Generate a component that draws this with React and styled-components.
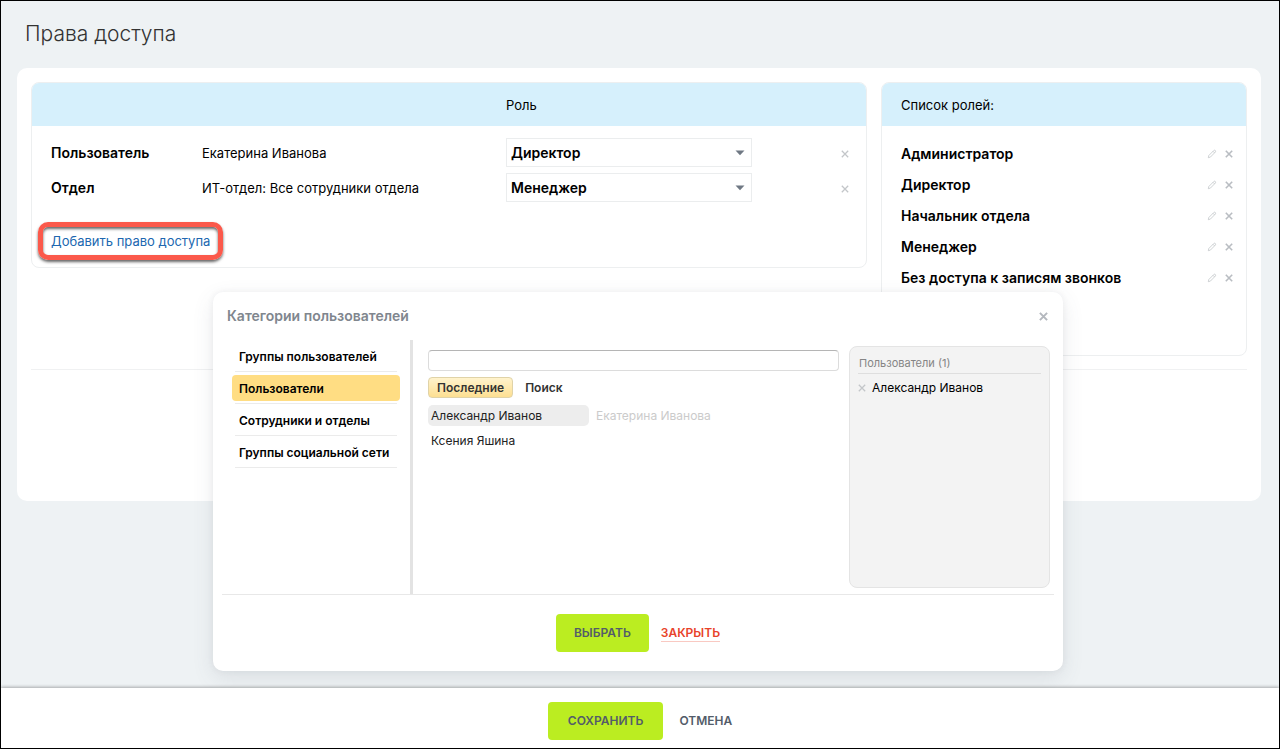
import React from 'react';
import styled, { createGlobalStyle, css } from 'styled-components';

const GlobalStyle = createGlobalStyle`
  *, *::before, *::after { box-sizing: border-box; }
  body {
    margin: 0;
    background: #eef2f4;
    color: #000;
    font: 13px/20px Inter, "Liberation Sans", sans-serif;
  }
  button, input, select { font: inherit; color: inherit; }
  button { cursor: pointer; }
  ul { list-style: none; margin: 0; padding: 0; }
`;

const Frame = styled.div`
  display: flex;
  flex-direction: column;
  min-height: 100vh;
  border: 1px solid #000;
`;

const PageTitle = styled.h1`
  margin: 0;
  padding: 17px 24px 18px;
  font-size: 21px;
  line-height: 32px;
  font-weight: 300;
  color: #333;
`;

const Card = styled.main`
  position: relative;
  min-height: 433px;
  margin: 0 18px 0 16px;
  padding: 14px;
  border-radius: 10px;
  background: #fff;
`;

const Columns = styled.div`
  display: flex;
  align-items: flex-start;
  gap: 14px;
  padding-bottom: 13px;
  border-bottom: 1px solid #f0f1f2;
`;

const Panel = styled.section`
  flex: ${(p) => (p.$side ? '0 1 366px' : '1 1 0')};
  min-height: ${(p) => (p.$side ? 274 : 186)}px;
  border: 1px solid #edeff0;
  border-radius: 8px;
  overflow: hidden;
`;

const PanelHeading = styled.h2`
  margin: 0;
  padding: 1px 19px 0;
  font-size: 13px;
  line-height: 42px;
  font-weight: 400;
  background: #d6f0fc;
`;

const AccessTable = styled.table`
  width: 100%;
  table-layout: fixed;
  border-collapse: collapse;
  th, td { padding: 0; text-align: left; }
  thead th { height: 43px; font-weight: 400; background: #d6f0fc; }
  tbody::before { content: ''; display: block; height: 9px; }
  tbody tr { height: 35px; }
  tbody th { padding-left: 19px; font-size: 14px; font-weight: 600; }
  td:last-child { padding-right: 17px; text-align: right; }
`;

const SelectBox = styled.div`
  position: relative;
  width: 246px;
  max-width: 100%;
  svg { position: absolute; top: 12px; right: 7px; pointer-events: none; }
`;

const RoleSelect = styled.select`
  display: block;
  width: 100%;
  height: 29px;
  padding: 0 24px 0 4px;
  border: 1px solid #ebedee;
  border-radius: 0;
  background: #fff;
  font-size: 14px;
  font-weight: 600;
  appearance: none;
`;

const IconButton = styled.button`
  display: inline-flex;
  padding: 0;
  border: 0;
  background: none;
  color: ${(p) => p.$color || '#c3c6c9'};
  svg { display: block; }
`;

const AddLink = styled.a`
  display: inline-block;
  margin: 17px 6px 0;
  padding: 4px 8px;
  border: 5px solid #fb594b;
  border-radius: 10px;
  box-shadow: 0 2px 3px rgba(0, 0, 0, 0.6), inset 0 2px 3px rgba(0, 0, 0, 0.6);
  color: #2067b0;
  text-decoration: none;
`;

const RoleList = styled.ul`
  padding: 12px 13px 0 19px;
`;

const RoleItem = styled.li`
  display: flex;
  align-items: center;
  gap: 8px;
  height: 31px;
  font-size: 14px;
  font-weight: 600;
  span { flex: 1; }
`;

const Dialog = styled.section`
  position: absolute;
  top: 224px;
  left: 0;
  right: 2px;
  width: 850px;
  max-width: 100%;
  margin: 0 auto;
  padding: 0 9px;
  border-radius: 10px;
  background: #fff;
  box-shadow: 0 7px 21px rgba(83, 92, 105, 0.12), 0 0 6px rgba(83, 92, 105, 0.08);
`;

const DialogHeader = styled.header`
  display: flex;
  align-items: center;
  justify-content: space-between;
  height: 48px;
  padding: 0 6px 0 5px;
  h2 { margin: 0; font-size: 14px; font-weight: 600; color: #80868e; }
`;

const DialogBody = styled.div`
  display: flex;
  min-height: 255px;
  border-bottom: 1px solid #e8e8e8;
`;

const CategoryList = styled.ul`
  flex: 0 0 191px;
  padding: 0 13px 0 13px;
  border-right: 3px solid #e3e3e3;
`;

const CategoryItem = styled.li`
  height: 32px;
  padding-top: 3px;
  border-bottom: 1px solid #ebebeb;
`;

const CategoryButton = styled.button`
  display: block;
  width: calc(100% + 6px);
  height: 26px;
  margin: 0 -3px;
  padding: 1px 7px 0;
  border: 0;
  border-radius: 4px;
  background: ${(p) => (p.$active ? '#ffdd83' : 'none')};
  font-size: 12px;
  font-weight: 600;
  text-align: left;
  white-space: nowrap;
`;

const Finder = styled.div`
  flex: 1;
  padding: 10px 10px 0 15px;
`;

const SearchInput = styled.input`
  display: block;
  width: 100%;
  height: 21px;
  padding: 0 4px;
  border: 1px solid #dcdcdc;
  border-top-color: #b5b5b5;
  border-radius: 4px;
  background: #fff;
`;

const TabBar = styled.div`
  display: flex;
  gap: 3px;
  margin: 6px 0 7px;
`;

const Tab = styled.button`
  height: 21px;
  padding: 0 8px;
  border: 1px solid transparent;
  border-radius: 4px;
  background: none;
  font-size: 12px;
  line-height: 18px;
  font-weight: 600;
  color: #333;
  ${(p) => p.$active && css`
    border-color: #e0d3a8;
    background: linear-gradient(#fff3cd, #fddf92);
  `}
`;

const People = styled.div`
  display: grid;
  grid-template-columns: 161px 161px;
  gap: 4px;
`;

const Person = styled.button`
  height: 21px;
  padding: 0 3px;
  border: 0;
  border-radius: 5px;
  background: ${(p) => (p.$selected ? '#ededed' : 'none')};
  color: ${(p) => (p.$muted ? '#cbcbcb' : '#222')};
  font-size: 12px;
  line-height: 18px;
  text-align: left;
`;

const Chosen = styled.aside`
  flex: 0 0 201px;
  margin: 6px 4px 6px 0;
  padding: 6px 8px;
  border: 1px solid #e4e4e4;
  border-radius: 8px;
  background: #f3f3f3;
  h3 {
    margin: 0 0 4px;
    padding: 0 1px;
    border-bottom: 1px solid #dedede;
    font-size: 11px;
    line-height: 20px;
    font-weight: 400;
    color: #858585;
  }
`;

const ChosenItem = styled.div`
  display: flex;
  align-items: center;
  gap: 6px;
  font-size: 12px;
`;

const Actions = styled.div`
  display: flex;
  align-items: center;
  justify-content: center;
  gap: 12px;
  height: 76px;
`;

const PrimaryButton = styled.button`
  height: 38px;
  padding: 0 ${(p) => (p.$wide ? 20 : 18)}px;
  border: 0;
  border-radius: 4px;
  background: #bbed21;
  color: #535c69;
  font-size: 12px;
  font-weight: 600;
  text-transform: uppercase;
`;

const CloseLink = styled.button`
  padding: 0;
  border: 0;
  border-bottom: 1px solid #f9c9c2;
  background: none;
  color: #e8432a;
  font-size: 12px;
  line-height: 16px;
  font-weight: 600;
  text-transform: uppercase;
`;

const Footer = styled.footer`
  position: relative;
  display: flex;
  align-items: center;
  justify-content: center;
  gap: 16px;
  height: 60px;
  margin-top: auto;
  padding-top: 6px;
  background: #fff;
  box-shadow: 0 -1px 3px rgba(0, 0, 0, 0.3);
`;

const CancelButton = styled.button`
  padding: 0;
  border: 0;
  background: none;
  color: #535c69;
  font-size: 12px;
  font-weight: 600;
  text-transform: uppercase;
`;

const Cross = ({ size = 8, weight = 2 }) => (
  <svg width={size} height={size} viewBox="0 0 8 8" aria-hidden="true">
    <path d="M.8.8l6.4 6.4M7.2.8L.8 7.2" stroke="currentColor" strokeWidth={weight * 0.8} fill="none" />
  </svg>
);

const Pencil = () => (
  <svg width="10" height="10" viewBox="0 0 10 10" aria-hidden="true">
    <path d="M1.3 8.7l.5-2.2L6.8 1.5q.8-.7 1.5 0t0 1.6L3.4 8.1zM6 2.3l1.6 1.6" stroke="currentColor" strokeWidth=".8" fill="none" />
  </svg>
);

const Caret = () => (
  <svg width="10" height="6" viewBox="0 0 10 6" aria-hidden="true">
    <path d="M.5.5h9L5 5.2z" fill="#6f7883" />
  </svg>
);

const roles = ['Администратор', 'Директор', 'Начальник отдела', 'Менеджер', 'Без доступа к записям звонков'];

const rights = [
  { kind: 'Пользователь', name: 'Екатерина Иванова', role: 'Директор' },
  { kind: 'Отдел', name: 'ИТ-отдел: Все сотрудники отдела', role: 'Менеджер' },
];

const categories = ['Группы пользователей', 'Пользователи', 'Сотрудники и отделы', 'Группы социальной сети'];

export default function App() {
  return (
    <>
      <GlobalStyle />
      <Frame>
        <PageTitle>Права доступа</PageTitle>
        <Card>
          <Columns>
            <Panel>
              <AccessTable>
                <colgroup>
                  <col style={{ width: 170 }} />
                  <col style={{ width: 304 }} />
                  <col />
                  <col style={{ width: 60 }} />
                </colgroup>
                <thead>
                  <tr>
                    <th colSpan={2} />
                    <th scope="col">Роль</th>
                    <th />
                  </tr>
                </thead>
                <tbody>
                  {rights.map((r) => (
                    <tr key={r.kind}>
                      <th scope="row">{r.kind}</th>
                      <td>{r.name}</td>
                      <td>
                        <SelectBox>
                          <RoleSelect defaultValue={r.role} aria-label={`Роль: ${r.name}`}>
                            {roles.map((role) => <option key={role}>{role}</option>)}
                          </RoleSelect>
                          <Caret />
                        </SelectBox>
                      </td>
                      <td><IconButton aria-label="Удалить"><Cross weight={1.6} /></IconButton></td>
                    </tr>
                  ))}
                </tbody>
              </AccessTable>
              <AddLink href="#add">Добавить право доступа</AddLink>
            </Panel>
            <Panel $side>
              <PanelHeading>Список ролей:</PanelHeading>
              <RoleList>
                {roles.map((role) => (
                  <RoleItem key={role}>
                    <span>{role}</span>
                    <IconButton aria-label="Изменить"><Pencil /></IconButton>
                    <IconButton aria-label="Удалить" $color="#b9bdc2"><Cross /></IconButton>
                  </RoleItem>
                ))}
              </RoleList>
            </Panel>
          </Columns>

          <Dialog role="dialog" aria-labelledby="dialog-title">
            <DialogHeader>
              <h2 id="dialog-title">Категории пользователей</h2>
              <IconButton aria-label="Закрыть окно" $color="#b4b8be"><Cross size={9} weight={2.2} /></IconButton>
            </DialogHeader>
            <DialogBody>
              <CategoryList>
                {categories.map((c) => (
                  <CategoryItem key={c}>
                    <CategoryButton $active={c === 'Пользователи'}>{c}</CategoryButton>
                  </CategoryItem>
                ))}
              </CategoryList>
              <Finder>
                <SearchInput type="text" aria-label="Поиск пользователей" />
                <TabBar>
                  <Tab $active>Последние</Tab>
                  <Tab>Поиск</Tab>
                </TabBar>
                <People>
                  <Person $selected>Александр Иванов</Person>
                  <Person $muted>Екатерина Иванова</Person>
                  <Person>Ксения Яшина</Person>
                </People>
              </Finder>
              <Chosen>
                <h3>Пользователи (1)</h3>
                <ChosenItem>
                  <IconButton aria-label="Убрать"><Cross weight={1.6} /></IconButton>
                  Александр Иванов
                </ChosenItem>
              </Chosen>
            </DialogBody>
            <Actions>
              <PrimaryButton>Выбрать</PrimaryButton>
              <CloseLink>Закрыть</CloseLink>
            </Actions>
          </Dialog>
        </Card>
        <Footer>
          <PrimaryButton $wide>Сохранить</PrimaryButton>
          <CancelButton>Отмена</CancelButton>
        </Footer>
      </Frame>
    </>
  );
}
